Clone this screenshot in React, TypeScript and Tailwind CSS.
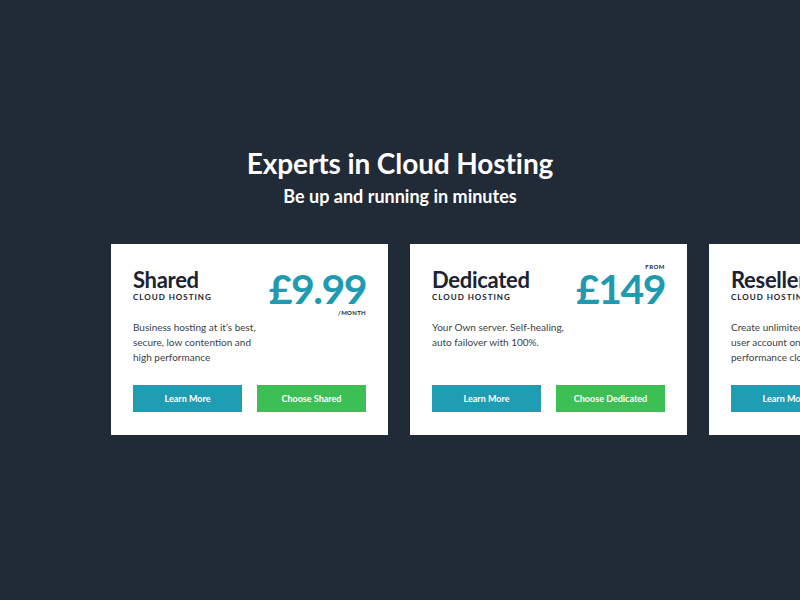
import React from 'react';

interface Plan {
  name: string;
  price: string;
  from?: boolean;
  month?: boolean;
  desc: string;
  cta: string;
}

const plans: Plan[] = [
  {
    name: 'Shared',
    price: '£9.99',
    month: true,
    desc: 'Business hosting at it’s best, secure, low contention and high performance',
    cta: 'Choose Shared',
  },
  {
    name: 'Dedicated',
    price: '£149',
    from: true,
    desc: 'Your Own server. Self-healing, auto failover with 100%.',
    cta: 'Choose Dedicated',
  },
  {
    name: 'Reseller',
    price: '£29',
    month: true,
    desc: 'Create unlimited cPanel user\u00a0account on high performance cloud',
    cta: 'Choose Reseller',
  },
];

const PlanCard: React.FC<{ plan: Plan }> = ({ plan }) => (
  <div className="w-[277px] h-[191px] shrink-0 bg-white px-[22px] pt-[20px] flex flex-col">
    <div className="flex justify-between items-start h-[56px]">
      <div className="pt-[3px]">
        <div className="text-[22px] leading-[26px] font-bold text-[#1b2231] tracking-[-0.3px]">{plan.name}</div>
        <div className="text-[8px] leading-[10px] font-bold tracking-[1px] text-[#1b2231] -mt-[1px]">CLOUD HOSTING</div>
      </div>
      <div className="flex flex-col items-end">
        <div className="h-[7px] text-[6px] leading-[6px] font-bold tracking-[0.5px] text-[#1b2231]">
          {plan.from ? 'FROM' : ''}
        </div>
        <div className="text-[41px] leading-[36px] font-bold text-[#1e9bb1] tracking-[-1.5px]">{plan.price}</div>
        <div className="h-[8px] text-[6px] leading-[8px] font-bold tracking-[0.3px] text-[#1b2231] mt-[2px]">
          {plan.month ? '/MONTH' : ''}
        </div>
      </div>
    </div>
    <p className="w-[134px] text-[10px] leading-[15px] text-[#3a3f48] h-[57px]">{plan.desc}</p>
    <div className="flex justify-between mt-[8px]">
      <button className="w-[109px] h-[27px] bg-[#1f9db3] text-white text-[9px] font-bold">Learn More</button>
      <button className="w-[109px] h-[27px] bg-[#3cbf55] text-white text-[9px] font-bold">{plan.cta}</button>
    </div>
  </div>
);

export default function App() {
  return (
    <div className="w-[800px] h-[600px] bg-[#212a37] overflow-hidden" style={{ fontFamily: 'Lato, "Open Sans", sans-serif' }}>
      <div className="pt-[146px] text-center text-white">
        <h1 className="text-[28px] leading-[34px] font-bold tracking-[-0.1px]">Experts in Cloud Hosting</h1>
        <h2 className="text-[18px] leading-[22px] font-bold mt-[5px]">Be up and running in minutes</h2>
      </div>
      <div className="flex gap-[22px] pl-[111px] mt-[37px]">
        {plans.map((p) => (
          <PlanCard key={p.name} plan={p} />
        ))}
      </div>
    </div>
  );
}
